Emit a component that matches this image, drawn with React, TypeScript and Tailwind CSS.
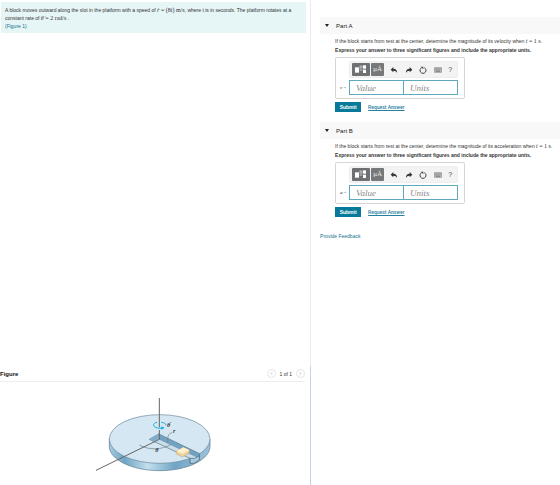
import React, { useState } from 'react'
import { ChevronLeft, ChevronRight } from 'lucide-react'

interface PartProps {
  id: string
  title: string
  symbol: string
  quantity: string
}

function TemplateIcon() {
  return (
    <svg viewBox="0 0 54 39" className="w-[18px] h-[13px]" aria-hidden="true">
      <rect x="9" y="13" width="12" height="16" fill="#fff" />
      <rect x="24" y="9" width="6" height="6" fill="none" stroke="#ddd" strokeWidth="2" />
      <rect x="33" y="7" width="9" height="10" fill="#fff" />
      <rect x="33" y="20" width="9" height="10" fill="#fff" />
      <path d="M23 21h8" stroke="#ccc" strokeWidth="3" />
    </svg>
  )
}

function UndoIcon() {
  return (
    <svg viewBox="0 0 24 24" className="w-2 h-2" fill="#333" aria-hidden="true">
      <path d="M10 3v5c8 0 12 5 11 13-2-5-5-7-11-7v5L2 11z" />
    </svg>
  )
}

function ResetIcon() {
  return (
    <svg viewBox="0 0 24 24" className="w-2 h-2" aria-hidden="true">
      <path d="M8 5a9 9 0 1 0 8 0" fill="none" stroke="#444" strokeWidth="3" />
      <path d="M5 2h8v8z" fill="#444" />
    </svg>
  )
}

function KeyboardIcon() {
  return (
    <svg viewBox="0 0 24 16" className="w-2 h-[6px]" aria-hidden="true">
      <rect x="1" y="1" width="22" height="14" rx="1" fill="#bbb" stroke="#888" strokeWidth="2" />
      <path d="M4 5h16M4 8h16" stroke="#777" strokeWidth="2" strokeDasharray="2 1" />
      <path d="M6 12h12" stroke="#666" strokeWidth="2" />
    </svg>
  )
}

function Part({ id, title, symbol, quantity }: PartProps) {
  const [open, setOpen] = useState(true)
  const [value, setValue] = useState('')
  const [units, setUnits] = useState('')

  return (
    <section className="mb-[10px]">
      <h2 className="bg-[#f8f8f8]">
        <button
          onClick={() => setOpen(!open)}
          aria-expanded={open}
          className="flex items-center w-full h-[17px] pl-[5px] gap-[7px] text-[6px] leading-[8px] text-[#222]"
        >
          <svg viewBox="0 0 8 6" className="w-1 h-[3px]" fill="#222" aria-hidden="true">
            <path d="M0 0h8L4 6z" />
          </svg>
          {title}
        </button>
      </h2>
      {open && (
        <form className="pl-[15px] pt-[3px]" onSubmit={(e) => e.preventDefault()}>
          <p className="text-[5px] leading-[9px] whitespace-nowrap">
            If the block starts from rest at the center, determine the magnitude of its {quantity} when{' '}
            <span className="font-['Liberation_Serif',serif] text-[6px]">
              <i>t</i> = 1 s
            </span>
            .
          </p>
          <p className="text-[5px] leading-[9px] font-bold whitespace-nowrap">
            Express your answer to three significant figures and include the appropriate units.
          </p>
          <div className="w-[130px] mt-[2px] py-[3px] pl-[3px] pr-[6px] border border-[#d5d5d5] rounded-[2px]">
            <div className="ml-[10px] flex items-center h-[17px] px-[2px] bg-[#f3f3f3] border border-[#eee] rounded-[2px]">
              <button type="button" aria-label="Templates" className="bg-[#6f7072] rounded-[1px]">
                <TemplateIcon />
              </button>
              <button
                type="button"
                aria-label="Symbols"
                className="ml-px w-[13px] h-[13px] bg-[#77787a] rounded-[1px] text-[#eee] text-[7px] leading-[13px] font-['Liberation_Serif',serif]"
              >
                μÅ
              </button>
              <div className="flex flex-1 items-center justify-between pl-[6px] pr-[3px]">
                <button type="button" aria-label="Undo"><UndoIcon /></button>
                <button type="button" aria-label="Redo" className="-scale-x-100"><UndoIcon /></button>
                <button type="button" aria-label="Reset"><ResetIcon /></button>
                <button type="button" aria-label="Keyboard"><KeyboardIcon /></button>
                <button type="button" aria-label="Help" className="text-[7px] leading-[8px] text-[#444]">?</button>
              </div>
            </div>
            <div className="flex items-center mt-[2px]">
              <label
                htmlFor={`${id}-value`}
                className="w-[10px] shrink-0 pl-px text-[5px] leading-[8px] text-[#222] whitespace-nowrap font-['Liberation_Serif',serif]"
              >
                <i>{symbol}</i> =
              </label>
              <input
                id={`${id}-value`}
                value={value}
                onChange={(e) => setValue(e.target.value)}
                placeholder="Value"
                className="flex-1 min-w-0 h-[15px] px-[6px] bg-white border border-[#5da9bd] font-['Liberation_Serif',serif] italic text-[9px] placeholder:text-[#888]"
              />
              <input
                aria-label={`${title} units`}
                value={units}
                onChange={(e) => setUnits(e.target.value)}
                placeholder="Units"
                className="flex-1 min-w-0 h-[15px] px-[6px] -ml-px bg-white border border-[#5da9bd] font-['Liberation_Serif',serif] italic text-[9px] placeholder:text-[#888]"
              />
            </div>
          </div>
          <div className="flex items-center gap-[7px] mt-[3px]">
            <button type="submit" className="w-[26px] h-[10px] bg-[#07799a] text-white text-[5px] leading-[10px] font-bold">
              Submit
            </button>
            <a href="#answer" className="font-[Roboto,sans-serif] text-[5px] leading-[8px] font-medium text-[#2580a0] underline">
              Request Answer
            </a>
          </div>
        </form>
      )}
    </section>
  )
}

function PlatformDrawing() {
  return (
    <svg viewBox="0 0 390 285" className="w-[130px] h-[95px]" role="img" aria-label="Block in a slotted rotating platform">
      <defs>
        <linearGradient id="rim" x1="0" x2="1">
          <stop offset="0" stopColor="#a5cbdf" />
          <stop offset="0.15" stopColor="#6fa5c6" />
          <stop offset="0.38" stopColor="#c3dfec" />
          <stop offset="0.65" stopColor="#70a5c6" />
          <stop offset="1" stopColor="#9dc3da" />
        </linearGradient>
      </defs>
      <path d="M58 147v22c0 40 68 73 151 73s151-33 151-73v-22z" fill="url(#rim)" stroke="#53758a" strokeWidth="2" />
      <ellipse cx="209" cy="147" rx="151" ry="73" fill="#d5e7f2" stroke="#688599" strokeWidth="2" />
      <path d="M178 148l28-16 122 59v15l-28 13v-14z" fill="#c8deeb" stroke="#557184" strokeWidth="2" />
      <path d="M206 132l122 59v14l-122-58z" fill="#72a2c2" stroke="#557184" strokeWidth="1" />
      <path d="M178 148l28-16v15l-17 8z" fill="#7fadca" />
      <path d="M300 205v15h12l16-10v-13l-14 8z" fill="#a9cadd" stroke="#3f6178" strokeWidth="2" />
      <path d="M259 184l21-12 18 8v9l-21 12-18-9z" fill="#efd39e" stroke="#a1824f" strokeWidth="1" />
      <path d="M259 184l21-12 18 8-20 11z" fill="#fff0cc" />
      <path d="M208 24v88M208 120v28L18 241" fill="none" stroke="#666" strokeWidth="3" />
      <path d="M148 165c28 16 67 15 96-2M234 157c-3-15 1-27 12-29" fill="none" stroke="#657b88" strokeWidth="2" />
      <path d="M201 97c-14 3-14 14 2 17 8 2 14 1 19-1M214 97c9 1 14 4 14 9" fill="none" stroke="#19afe0" strokeWidth="3" />
      <path d="M213 109l10 4-8 6z" fill="#19afe0" />
      <g fontFamily="'Liberation Serif', serif" fontStyle="italic" fontWeight="bold" fontSize="18" fill="#333">
        <text x="231" y="110">θ̇</text>
        <text x="249" y="130">r</text>
        <text x="196" y="186">θ</text>
      </g>
    </svg>
  )
}

export default function App() {
  return (
    <div className="grid grid-cols-[5fr_4fr] min-h-screen bg-white text-[#333] font-['Liberation_Sans',Arial,sans-serif]">
      <div className="flex flex-col">
        <div className="flex-1 border-r border-[#e6ecf2] pt-[2px] pl-px pr-1">
          <div className="bg-[#e6f5f6] text-[5px] leading-[8px] pt-1 pb-[3px] pl-1">
            <p className="whitespace-nowrap">
              A block moves outward along the slot in the platform with a speed of{' '}
              <span className="font-['Liberation_Serif',serif] text-[6px]">
                <i>ṙ</i> = (8<i>t</i>) m/s
              </span>
              , where t is in seconds. The platform rotates at a
            </p>
            <p>
              constant rate of{' '}
              <span className="font-['Liberation_Serif',serif] text-[6px]">
                <i>θ̇</i> = 2 rad/s
              </span>{' '}
              .
            </p>
            <a href="#figure" className="block text-[#16718c]">(Figure 1)</a>
          </div>
        </div>
        <section id="figure" className="border-r border-[#c3d2e8]">
          <div className="mr-[5px] h-4 flex items-center justify-between border-b border-[#eee]">
            <h2 className="text-[6px] leading-[8px] font-bold text-[#111]">Figure</h2>
            <div className="flex items-center gap-1 text-[5px] leading-[8px]">
              <button aria-label="Previous figure" className="w-[9px] h-[9px] flex items-center justify-center border border-[#e5e5e5] rounded-full">
                <ChevronLeft className="w-[5px] h-[5px] text-[#888]" />
              </button>
              <span>1 of 1</span>
              <button aria-label="Next figure" className="w-[9px] h-[9px] flex items-center justify-center border border-[#e5e5e5] rounded-full">
                <ChevronRight className="w-[5px] h-[5px] text-[#888]" />
              </button>
            </div>
          </div>
          <div className="flex justify-center pt-2">
            <PlatformDrawing />
          </div>
        </section>
      </div>
      <main className="pl-[9px] pt-[17px]">
        <Part id="a" title="Part A" symbol="v" quantity="velocity" />
        <Part id="b" title="Part B" symbol="a" quantity="acceleration" />
        <a href="#feedback" className="block mt-[15px] text-[5px] leading-[8px] text-[#16718c]">
          Provide Feedback
        </a>
      </main>
    </div>
  )
}
